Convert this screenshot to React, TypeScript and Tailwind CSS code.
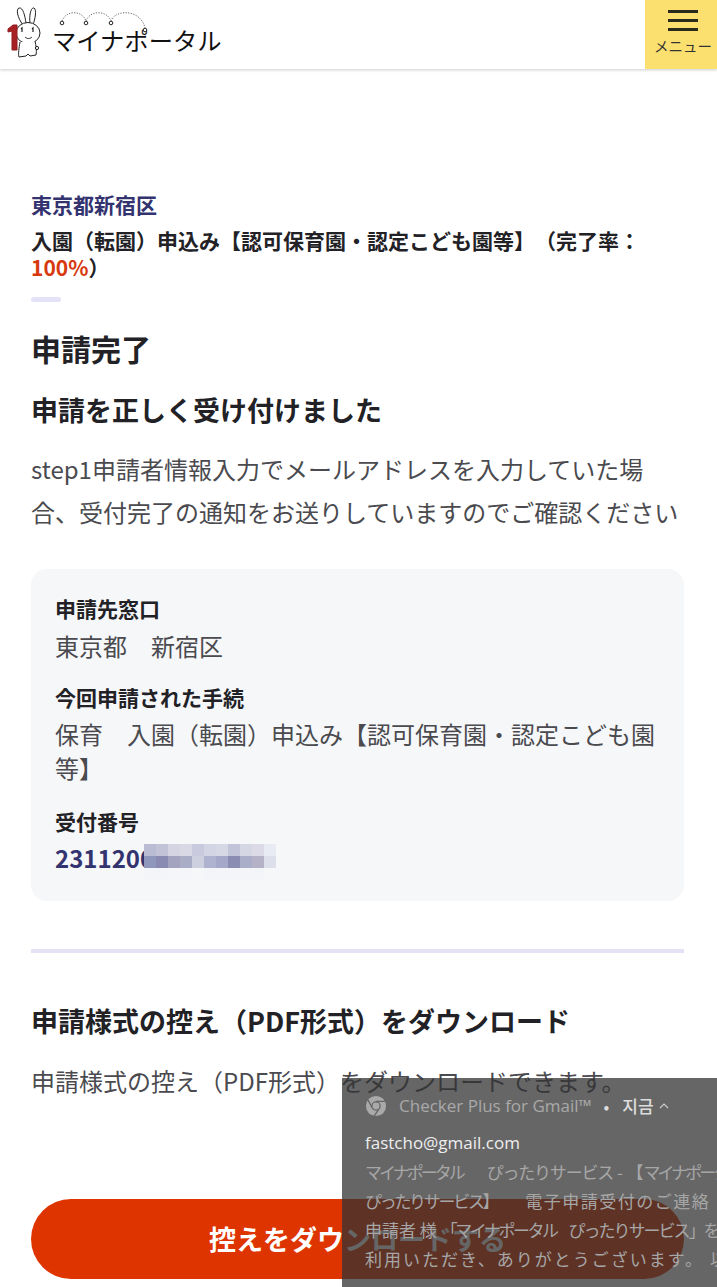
const blurRows = [
  ['#b9bcd2', '#c3c3d7', '#d4d4e3', '#d9d9e6', '#c9cade', '#d3d5e4', '#d6d8e6', '#c2c4da', '#d5d7e5', '#dbdae6', '#e8ebf3'],
  ['#8f97bc', '#8a8bb2', '#a3a3bf', '#a9aec6', '#ccd0df', '#b0b3cf', '#a6a8c9', '#8a8cb2', '#abaec8', '#b5b2c8', '#dde0eb'],
  ['#f3f5f9', '#f3f5f9', '#f5f6f9', '#f5f6f9', '#f6f7f9', '#f4f5f9', '#f4f5f9', '#f3f5f9', '#f4f5f9', '#f3f5f9', '#f6f7f9'],
]

function Logo() {
  return (
    <div className="flex items-center">
      <svg width="48" height="69" viewBox="0 0 48 69" className="shrink-0" fill="none" stroke="#222" strokeWidth="1">
        <path d="M23 25 C17 17 16 9 19 8 C23 7 25 16 26 23" fill="#fff" />
        <path d="M30 23 C29 15 31 7 34 8 C37 10 35 19 33 25" fill="#fff" />
        <ellipse cx="28" cy="33" rx="12" ry="10.5" fill="#fff" />
        <path d="M20 42 C19 48 18 54 19 57 L26 56 L28 54 L30 56 L36 55 C37 50 36 46 35 41" fill="#fff" />
        <path d="M21 29l1-1v4M32 29l1-1v4" strokeWidth="1.2" />
        <path d="M25 37 C27 39 30 39 32 37" />
        <circle cx="37" cy="48" r="1.6" fill="#fff" />
        <path d="M8 29 L13 25 L17 25 L17 50 L12 50 L12 31 L8 32 Z" fill="#a81f24" stroke="#8f1a1f" />
      </svg>
      <div className="relative ml-[4px] mt-[11px]">
        <svg width="100" height="26" viewBox="0 0 100 26" className="absolute left-[5px] top-[-18px]" fill="none">
          <path d="M5 11 C9 0 25 0 29 11 C33 0 50 0 54 11 C58 -1 84 -1 88 18" stroke="#555" strokeWidth="0.9" strokeDasharray="1.2 1.4" />
          <circle cx="5" cy="13" r="1.8" fill="#fff" stroke="#222" />
          <circle cx="29" cy="13" r="1.8" fill="#fff" stroke="#222" />
          <circle cx="54" cy="13" r="1.8" fill="#fff" stroke="#222" />
          <circle cx="88" cy="20" r="1.8" fill="#fff" stroke="#222" />
        </svg>
        <span className="block text-[24.3px] leading-[24px] text-[#111]">マイナポータル</span>
      </div>
    </div>
  )
}

export default function App() {
  return (
    <div className="relative h-[1287px] overflow-hidden bg-white font-['Noto_Sans_CJK_JP','Noto_Sans',sans-serif] text-[#222226] [text-spacing-trim:space-all]">
      <header className="flex h-[69px] items-center justify-between shadow-[0_1px_3px_rgba(0,0,0,0.2)]">
        <Logo />
        <button className="flex h-full w-[72px] flex-col items-center bg-[#fbe06f] pt-[10px] pl-[4px]">
          <span className="flex w-[30px] flex-col gap-[6px]">
            <span className="h-[3px] bg-[#2a2a1c]" />
            <span className="h-[3px] bg-[#2a2a1c]" />
            <span className="h-[3px] bg-[#2a2a1c]" />
          </span>
          <span className="mt-[6px] whitespace-nowrap text-[14.5px] leading-[18px] text-[#333]">メニュー</span>
        </button>
      </header>

      <main className="pt-[119px] pr-[33px] pl-[31px]">
        <p className="text-[21px] leading-[32px] font-bold text-[#33336f]">東京都新宿区</p>
        <p className="mt-[7px] text-[21px] leading-[27px] font-bold">
          入園（転園）申込み【認可保育園・認定こども園等】（完了率：<span className="text-[#d6390d]">100%</span>）
        </p>
        <div className="mt-[16px] h-[5px] w-[30px] rounded-full bg-[#e4e2f8]" />

        <h1 className="mt-[24px] text-[30px] leading-[44px] font-bold">申請完了</h1>
        <h2 className="mt-[20px] text-[27px] leading-[40px] font-bold">申請を正しく受け付けました</h2>
        <p className="mt-[17px] text-[24px] leading-[43px] text-[#4a4a4f]">
          step1申請者情報入力でメールアドレスを入力していた場合、受付完了の通知をお送りしていますのでご確認ください
        </p>

        <section className="mt-[36px] rounded-[16px] bg-[#f6f7f9] px-[24px] pt-[23px] pb-[26px]">
          <dl>
            <dt className="text-[21px] leading-[32px] font-bold">申請先窓口</dt>
            <dd className="mt-[5px] text-[24px] leading-[34px] text-[#4a4a4f]">東京都　新宿区</dd>
            <dt className="mt-[18px] text-[21px] leading-[32px] font-bold">今回申請された手続</dt>
            <dd className="mt-[4px] text-[24px] leading-[34px] text-[#4a4a4f]">保育　入園（転園）申込み【認可保育園・認定こども園等】</dd>
            <dt className="mt-[20px] text-[21px] leading-[32px] font-bold">受付番号</dt>
            <dd className="relative mt-[4px] text-[24px] leading-[34px] font-bold text-[#33336f]">
              231120000000000
              <div className="absolute left-[89px] top-[3px] flex flex-col bg-[#f6f7f9]">
                {blurRows.map((row, i) => (
                  <div key={i} className="flex">
                    {row.map((c, j) => (
                      <div key={j} className="h-[12px] w-[12px]" style={{ backgroundColor: c }} />
                    ))}
                  </div>
                ))}
              </div>
            </dd>
          </dl>
        </section>

        <div className="mt-[48px] h-[4px] bg-[#e4e2f4]" />

        <h2 className="mt-[48px] text-[27px] leading-[40px] font-bold">申請様式の控え（PDF形式）をダウンロード</h2>
        <p className="mt-[18px] text-[24px] leading-[43px] text-[#4a4a4f]">申請様式の控え（PDF形式）をダウンロードできます。</p>

        <button className="mt-[97px] flex h-[80px] w-full items-center justify-center rounded-full bg-[#de3400] text-[27px] font-bold text-white">
          控えをダウンロードする
        </button>
      </main>

      {/* chrome notification toast sitting on top of the page */}
      <aside className="absolute top-[1078px] left-[342px] h-[209px] w-[375px] overflow-hidden bg-[#333333]/75 pt-[17px] pl-[23px] whitespace-nowrap">
        <div className="flex h-[22px] items-center text-[17px] text-[#a9a9a9]">
          <svg width="22" height="22" viewBox="0 0 24 24" className="mr-[12px] shrink-0">
            <circle cx="12" cy="12" r="11" fill="#a9a9a9" />
            <path d="M12 7h10M8 14L3 5M15.5 14.5L10 23" stroke="#666" strokeWidth="1.4" fill="none" />
            <circle cx="12" cy="12" r="5.2" fill="#666" />
            <circle cx="12" cy="12" r="3.8" fill="#a9a9a9" />
          </svg>
          <span className="font-['Open_Sans',sans-serif]">Checker Plus for Gmail™</span>
          <span className="ml-[12px] text-[#ddd]">•</span>
          <span className="ml-[13px] font-['Noto_Sans_CJK_KR',sans-serif] font-medium text-[#ddd]">지금</span>
          <svg width="12" height="12" viewBox="0 0 12 12" className="ml-[4px]" fill="none" stroke="#ccc" strokeWidth="1.2">
            <path d="M2 8l4-4 4 4" />
          </svg>
        </div>
        <p className="mt-[14px] font-['Open_Sans',sans-serif] text-[17px] leading-[24px] text-[#eee]">fastcho@gmail.com</p>
        <div className="mt-[2px] text-[17px] leading-[29px] text-[#a6a6a6]">
          <p>
            <span className="tracking-[-3px]">マイナポータル</span>
            <span className="ml-[24px] tracking-[-1.2px]">ぴったりサービス</span>
            <span> - 【</span>
            <span className="tracking-[-3px]">マイナポータル</span>
          </p>
          <p>
            <span className="tracking-[-2.3px]">ぴったりサービス】</span>
            <span className="ml-[28px] tracking-[1.5px]">電子申請受付のご連絡</span>
          </p>
          <p>
            <span>申請者 様</span>
            <span className="ml-[4px] tracking-[-2.5px]">「マイナポータル</span>
            <span className="ml-[12px] tracking-[-2px]">ぴったりサービス」をご</span>
          </p>
          <p className="tracking-[2px]">利用いただき、ありがとうございます。 以下</p>
        </div>
      </aside>
    </div>
  )
}
